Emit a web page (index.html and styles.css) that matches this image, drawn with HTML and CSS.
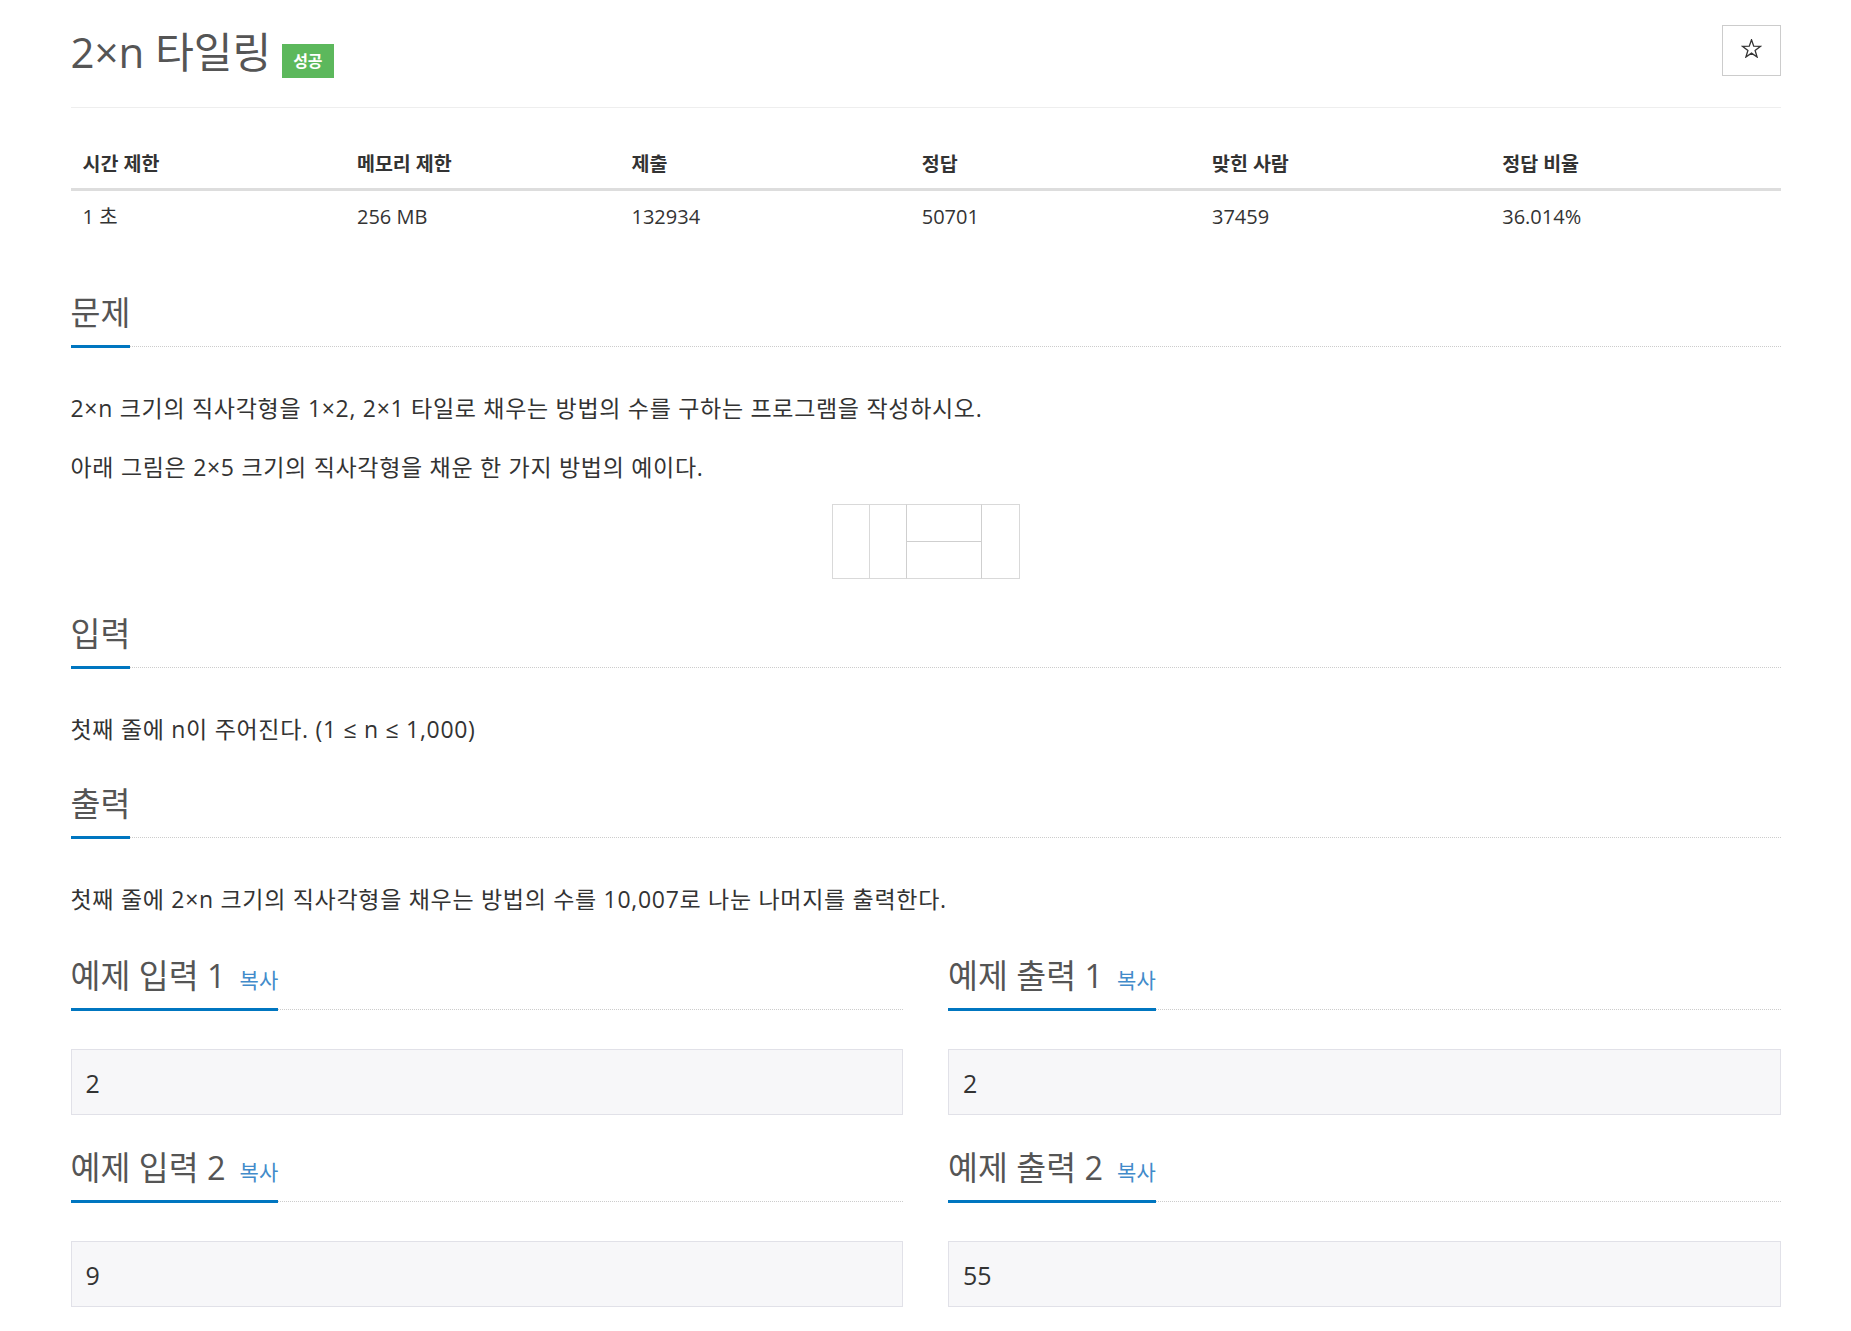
FILE: index.html
```html
<!DOCTYPE html>
<html lang="ko">
<head>
    <meta charset="UTF-8">
    <meta name="viewport" content="width=device-width, initial-scale=1.0">
    <title>2×n 타일링</title>
    <link rel="stylesheet" href="styles.css">
</head>
<body>

<div class="container">

    <div class="page-header">
        <h1 class="problem-title">
            <span>2×n 타일링</span>
            <span class="label-success">성공</span>
        </h1>
        <button class="star-button" title="즐겨찾기">
            <svg width="21" height="19" viewBox="0 0 20 19">
                <polygon points="10,0.8 12.23,7.23 19.03,7.36 13.61,11.47 15.58,17.99 10,14.1 4.42,17.99 6.39,11.47 0.97,7.36 7.77,7.23" fill="none" stroke="#333" stroke-width="1.3" stroke-linejoin="miter"/>
            </svg>
        </button>
    </div>

    <table class="problem-info">
        <thead>
            <tr>
                <th>시간 제한</th>
                <th>메모리 제한</th>
                <th>제출</th>
                <th>정답</th>
                <th>맞힌 사람</th>
                <th>정답 비율</th>
            </tr>
        </thead>
        <tbody>
            <tr>
                <td>1 초</td>
                <td>256 MB</td>
                <td>132934</td>
                <td>50701</td>
                <td>37459</td>
                <td>36.014%</td>
            </tr>
        </tbody>
    </table>

    <!-- 문제 -->
    <section class="section">
        <div class="headline"><h2>문제</h2></div>
        <p>2×n 크기의 직사각형을 1×2, 2×1 타일로 채우는 방법의 수를 구하는 프로그램을 작성하시오.</p>
        <p>아래 그림은 2×5 크기의 직사각형을 채운 한 가지 방법의 예이다.</p>
        <div class="problem-image">
            <svg width="188" height="75" viewBox="0 0 188 75">
                <g fill="none" stroke="#d9d9d9" stroke-width="1">
                    <rect x="0.5" y="0.5" width="187" height="74"/>
                    <line x1="37.5" y1="0.5" x2="37.5" y2="74.5"/>
                    <line x1="74.5" y1="0.5" x2="74.5" y2="74.5" stroke="#cfcfcf"/>
                    <line x1="149.5" y1="0.5" x2="149.5" y2="74.5" stroke="#cfcfcf"/>
                    <line x1="74.5" y1="37.5" x2="149.5" y2="37.5" stroke="#cfcfcf"/>
                </g>
            </svg>
        </div>
    </section>

    <!-- 입력 -->
    <section class="section">
        <div class="headline"><h2>입력</h2></div>
        <p>첫째 줄에 n이 주어진다. (1 ≤ n ≤ 1,000)</p>
    </section>

    <!-- 출력 -->
    <section class="section">
        <div class="headline"><h2>출력</h2></div>
        <p>첫째 줄에 2×n 크기의 직사각형을 채우는 방법의 수를 10,007로 나눈 나머지를 출력한다.</p>
    </section>

    <!-- 예제 -->
    <div class="samples">
        <section class="section">
            <div class="headline"><h2>예제 입력 1<a class="copy-button">복사</a></h2></div>
            <pre class="sampledata">2</pre>
        </section>
        <section class="section">
            <div class="headline"><h2>예제 출력 1<a class="copy-button">복사</a></h2></div>
            <pre class="sampledata">2</pre>
        </section>
        <section class="section">
            <div class="headline"><h2>예제 입력 2<a class="copy-button">복사</a></h2></div>
            <pre class="sampledata">9</pre>
        </section>
        <section class="section">
            <div class="headline"><h2>예제 출력 2<a class="copy-button">복사</a></h2></div>
            <pre class="sampledata">55</pre>
        </section>
    </div>

</div>

</body>
</html>
```

FILE: styles.css
```css
body {
    margin: 0;
    background-color: #fff;
    color: #333;
    font-family: "Open Sans", "Noto Sans CJK KR", sans-serif;
}
.container {
    width: 1710px;
    margin: 0 auto;
}

/* Header */
.page-header {
    display: flex;
    justify-content: space-between;
    align-items: flex-start;
    padding: 28px 0 29px;
    border-bottom: 1px solid #eee;
}
.problem-title {
    display: flex;
    align-items: flex-start;
    gap: 11px;
    margin: 0;
    font-size: 42px;
    line-height: 48px;
    font-weight: normal;
    color: #555;
}
.label-success {
    margin-top: 16px;
    padding: 0 11px;
    height: 34px;
    line-height: 34px;
    font-size: 16px;
    font-weight: bold;
    color: #fff;
    background-color: #5cb85c;
}
.star-button {
    margin-top: -3px;
    width: 59px;
    height: 51px;
    padding: 0;
    display: flex;
    align-items: center;
    justify-content: center;
    background-color: #fff;
    border: 1px solid #ccc;
    cursor: pointer;
}
.star-button svg {
    margin-top: -4px;
}

/* Info table */
.problem-info {
    width: 100%;
    margin: 31px 0 34px;
    border-collapse: collapse;
    table-layout: fixed;
}
.problem-info th {
    width: 17%;
    padding: 12px;
    text-align: left;
    font-size: 19.5px;
    line-height: 25px;
    font-weight: bold;
    border-bottom: 3px solid #ddd;
}
.problem-info th:nth-child(-n+2) {
    width: 16%;
}
.problem-info td {
    padding: 13px 12px 12px;
    font-size: 20px;
    line-height: 25px;
}

/* Sections */
.section {
    padding-top: 20px;
}
.headline {
    display: flex;
    border-bottom: 1px dotted #ccc;
    margin-bottom: 39px;
}
.headline h2 {
    margin: 0 0 -2px 0;
    padding-bottom: 15px;
    font-size: 32.5px;
    line-height: 35px;
    font-weight: normal;
    color: #555;
    border-bottom: 3px solid #0076c0;
}
.copy-button {
    margin-left: 14px;
    font-size: 21px;
    line-height: 1;
    color: #428bca;
    cursor: pointer;
}
.section p {
    margin: 0 0 14px;
    font-size: 23px;
    line-height: 45px;
    letter-spacing: 0.7px;
}
.problem-image {
    height: 75px;
    margin-bottom: 17px;
    text-align: center;
}

/* Samples */
.samples {
    display: grid;
    grid-template-columns: 1fr 1fr;
    column-gap: 45px;
    padding-top: 2px;
}
.sampledata {
    margin: 0 0 15px;
    padding: 15px 14px 13px;
    font-family: "Open Sans", "Noto Sans CJK KR", sans-serif;
    font-size: 25px;
    line-height: 36px;
    color: #333;
    background-color: #f7f7f9;
    border: 1px solid #e1e1e8;
}
```
